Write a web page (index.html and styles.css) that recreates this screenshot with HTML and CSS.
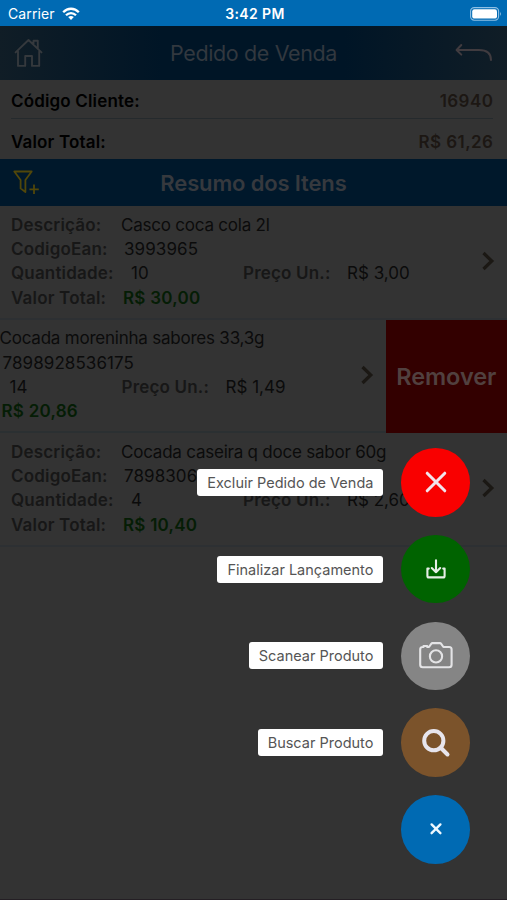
FILE: index.html
```html
<!DOCTYPE html>
<html lang="pt-BR">
<head>
<meta charset="utf-8">
<title>Pedido de Venda</title>
<link rel="stylesheet" href="styles.css">
</head>
<body>
<div class="screen">
  <div class="status">
    <div class="carrier"><span>Carrier</span>
      <svg width="18" height="14" viewBox="0 0 18 14" fill="none" stroke="#fff" stroke-width="2.3"><path d="M1.2 5.2C5.6 .6 12.4 .6 16.8 5.2M4 8.2c2.9-2.9 7.1-2.9 10 0"/><path d="M9 13 6.2 10.1q2.8-2.2 5.6 0z" fill="#fff" stroke="none"/></svg>
    </div>
    <div class="clock">3:42 PM</div>
    <svg class="battery" width="32" height="14" viewBox="0 0 32 14"><rect x=".6" y=".6" width="28" height="12.6" rx="3.6" fill="none" stroke="#8fc0e4" stroke-width="1.1"/><rect x="2.2" y="2.2" width="24.8" height="9.4" rx="2.2" fill="#fff"/><path d="M30 4.8q1.6 2.1 0 4.2z" fill="#a5cdea"/></svg>
  </div>
  <header class="header">
    <svg class="home" width="30" height="30" viewBox="0 0 30 30" fill="none" stroke="#35393d" stroke-width="1.9" stroke-linejoin="round" stroke-linecap="round"><path d="M1.6 14.4 14.5 2l13 12.4M4 13.5v14.4h7.2V18h6.8v9.9h7.2V13.5M19.5 6V2.8h4.3v7.6"/></svg>
    <h1>Pedido de Venda</h1>
    <svg class="back" width="38" height="20" viewBox="0 0 38 20" fill="none" stroke="#403b3f" stroke-width="2" stroke-linecap="round" stroke-linejoin="round"><path d="M6.3 2 1.6 7l4.7 4.6M2 7h22c8 0 12 3.2 12 10"/></svg>
  </header>
  <section class="summary">
    <div class="total first"><b>Código Cliente:</b><strong>16940</strong></div>
    <div class="total"><b>Valor Total:</b><strong>R$ 61,26</strong></div>
  </section>
  <div class="bar">
    <svg width="28" height="26" viewBox="0 0 28 26" fill="none" stroke="#51470a" stroke-width="1.8" stroke-linejoin="round"><path d="M1.3 1.5h17.4L12.4 10v12L7.6 18.4V10zM21 14.5v9.6M16.4 19.3h9.4"/></svg>
    <h2>Resumo dos Itens</h2>
  </div>
  <ul class="items">
    <li class="item">
      <div class="content">
        <div class="fields">
          <p class="name"><b>Descrição:</b><span>Casco coca cola 2l</span></p>
          <p class="ean"><b>CodigoEan:</b><span>3993965</span></p>
          <p class="qty"><b>Quantidade:</b><span>10</span><b class="price">Preço Un.:</b><span class="unit">R$ 3,00</span></p>
          <p class="sum"><b>Valor Total:</b><strong>R$ 30,00</strong></p>
        </div>
        <svg class="chevron" width="14" height="20" viewBox="0 0 14 20"><path d="m2.5 2 8.3 8-8.3 8"/></svg>
      </div>
    </li>
    <li class="item swiped">
      <div class="content">
        <div class="fields">
          <p class="name"><b></b><span>Cocada moreninha sabores 33,3g</span></p>
          <p class="ean"><b></b><span>7898928536175</span></p>
          <p class="qty"><b></b><span>14</span><b class="price">Preço Un.:</b><span class="unit">R$ 1,49</span></p>
          <p class="sum"><b></b><strong>R$ 20,86</strong></p>
        </div>
        <svg class="chevron" width="14" height="20" viewBox="0 0 14 20"><path d="m2.5 2 8.3 8-8.3 8"/></svg>
      </div>
      <div class="remove">Remover</div>
    </li>
    <li class="item">
      <div class="content">
        <div class="fields">
          <p class="name"><b>Descrição:</b><span>Cocada caseira q doce sabor 60g</span></p>
          <p class="ean"><b>CodigoEan:</b><span>7898306</span></p>
          <p class="qty"><b>Quantidade:</b><span>4</span><b class="price">Preço Un.:</b><span class="unit">R$ 2,60</span></p>
          <p class="sum"><b>Valor Total:</b><strong>R$ 10,40</strong></p>
        </div>
        <svg class="chevron" width="14" height="20" viewBox="0 0 14 20"><path d="m2.5 2 8.3 8-8.3 8"/></svg>
      </div>
    </li>
  </ul>
  <div class="actions">
    <div class="action"><span class="tip">Excluir Pedido de Venda</span>
      <div class="fab red"><svg width="22" height="22" viewBox="0 0 22 22" fill="none" stroke="#f1e4ec" stroke-width="3" stroke-linecap="round"><path d="m2.2 2.2 17.6 17.6m0-17.6L2.2 19.8"/></svg></div></div>
    <div class="action"><span class="tip">Finalizar Lançamento</span>
      <div class="fab green"><svg width="20" height="20" viewBox="0 0 20 20" fill="none" stroke="#e6eee6" stroke-width="2.1" stroke-linecap="round" stroke-linejoin="round"><path d="M10 1.2v12M5.8 9l4.2 4.2L14.2 9M2.8 9.6H1.4v7.3q0 1.5 1.5 1.5h14.2q1.5 0 1.5-1.5V9.6h-1.4"/></svg></div></div>
    <div class="action"><span class="tip">Scanear Produto</span>
      <div class="fab gray"><svg width="34" height="28" viewBox="0 0 34 28" fill="none" stroke="#e4e4e6" stroke-width="2.1" stroke-linejoin="round"><path d="M3.5 5h1V4h3.7v1H10l2.2-3.2q.5-.7 1.3-.7h7.4q.8 0 1.3.7L24.4 5h5.7q2.5 0 2.5 2.5v15.2q0 2.5-2.5 2.5H3.7q-2.5 0-2.5-2.5V7.5Q1.2 5 3.5 5z"/><circle cx="17" cy="14.4" r="6.1"/></svg></div></div>
    <div class="action"><span class="tip">Buscar Produto</span>
      <div class="fab brown"><svg width="30" height="30" viewBox="0 0 30 30" fill="none" stroke="#e7e5ed" stroke-width="4" stroke-linecap="round"><circle cx="12.8" cy="12.7" r="9.6"/><path d="m20.5 20.5 6 6"/></svg></div></div>
    <div class="action">
      <div class="fab blue"><svg width="14" height="14" viewBox="0 0 14 14" fill="none" stroke="#eef8ff" stroke-width="2.4" stroke-linecap="round"><path d="m2.6 2.4 8.8 8.8m0-8.8-8.8 8.8"/></svg></div></div>
  </div>
</div>
</body>
</html>
```
FILE: styles.css
```css
* { box-sizing: border-box; margin: 0; padding: 0; }
body { background: #333; font-family: Inter, "Liberation Sans", sans-serif; }
svg { display: block; flex: none; }
.screen { position: relative; width: 507px; height: 900px; overflow: hidden; background: #333; border-bottom: 1px solid #241f24; }

.status { display: grid; grid-template-columns: 1fr auto 1fr; align-items: center; height: 26px; padding: 1px 5px 0 8px; background: #006ab3; color: #fff; font-size: 14px; }
.carrier { display: flex; align-items: center; gap: 7px; letter-spacing: .1px; }
.clock { font-weight: 600; letter-spacing: .4px; }
.battery { justify-self: end; }

.header { display: grid; grid-template-columns: 60px 1fr 60px; align-items: center; height: 54px; padding: 0 14px; background: linear-gradient(90deg, #101d26 0, #001526 32%, #001526 68%, #101d26 100%); }
.header h1 { text-align: center; font-weight: 400; font-size: 21.5px; letter-spacing: -.37px; color: #32383f; }
.back { justify-self: end; }

.summary { height: 79px; font-size: 17px; color: #000; }
.total { display: flex; justify-content: space-between; align-items: center; margin: 0 14px 0 11px; height: 40px; padding-top: 5px; }
.total b { font-weight: 600; letter-spacing: .16px; }
.total strong { font-weight: 600; letter-spacing: .45px; margin-right: -.4px; color: #1c1713; }
.total.first { height: 39px; padding-top: 3px; border-bottom: 1px solid #252a2d; }

.bar { display: flex; align-items: center; height: 47px; padding-left: 13px; background: #00182b; }
.bar h2 { flex: 1; margin-right: 41px; text-align: center; font-weight: 600; font-size: 22px; letter-spacing: -.15px; color: #36393e; }

.items { list-style: none; }
.item { display: flex; height: 113.6px; overflow: hidden; }
.content { display: flex; flex: none; width: 507px; height: 113.6px; align-items: center; justify-content: space-between; padding: 5px 12px 6px 11px; border-bottom: 2px solid #2d3033; }
.swiped .content { margin-left: -121.5px; border-bottom-color: #2b3032; }
.fields { font-size: 17px; color: #0b0b0b; }
.fields p { display: flex; height: 24.4px; line-height: 24.4px; white-space: nowrap; }
.fields b { flex: none; width: 110px; font-weight: 600; letter-spacing: .18px; color: #171717; }
.name span { letter-spacing: -.22px; }
.ean b { width: 113px; }
.ean span { letter-spacing: .08px; }
.qty b { width: 120px; }
.qty span { width: 112px; }
.qty .price { width: 104px; }
.sum b { width: 112px; }
.sum strong { font-weight: 600; letter-spacing: .25px; color: #051d05; }
.chevron path { fill: none; stroke: #1b1814; stroke-width: 3.2; }
.remove { display: flex; align-items: center; justify-content: center; flex: none; width: 121.5px; height: 113.6px; background: #300; color: #51403f; font-size: 23.5px; font-weight: 600; letter-spacing: -.1px; }

.actions { position: absolute; right: 37px; top: 448px; display: flex; flex-direction: column; gap: 18.2px; align-items: flex-end; }
.action { display: flex; align-items: center; gap: 18px; }
.tip { display: flex; align-items: center; height: 27px; padding: 0 10px; border-radius: 3px; background: #fff; color: #555; font-size: 14.5px; white-space: nowrap; }
.fab { display: flex; align-items: center; justify-content: center; width: 68.6px; height: 68.6px; border-radius: 50%; }
.red { background: #f90000; }
.green { background: #006300; }
.gray { background: #858585; }
.brown { background: #7b532b; }
.blue { background: #006ab3; }
```
